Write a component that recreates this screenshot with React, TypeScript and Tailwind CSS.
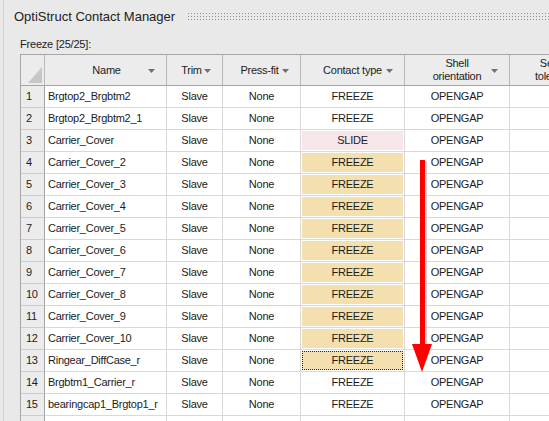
import React from "react";

type Row = { name: string; contact: "FREEZE" | "SLIDE"; hl?: "tan" | "pink"; focus?: boolean };

const ROWS: Row[] = [
  { name: "Brgtop2_Brgbtm2", contact: "FREEZE" },
  { name: "Brgtop2_Brgbtm2_1", contact: "FREEZE" },
  { name: "Carrier_Cover", contact: "SLIDE", hl: "pink" },
  { name: "Carrier_Cover_2", contact: "FREEZE", hl: "tan" },
  { name: "Carrier_Cover_3", contact: "FREEZE", hl: "tan" },
  { name: "Carrier_Cover_4", contact: "FREEZE", hl: "tan" },
  { name: "Carrier_Cover_5", contact: "FREEZE", hl: "tan" },
  { name: "Carrier_Cover_6", contact: "FREEZE", hl: "tan" },
  { name: "Carrier_Cover_7", contact: "FREEZE", hl: "tan" },
  { name: "Carrier_Cover_8", contact: "FREEZE", hl: "tan" },
  { name: "Carrier_Cover_9", contact: "FREEZE", hl: "tan" },
  { name: "Carrier_Cover_10", contact: "FREEZE", hl: "tan" },
  { name: "Ringear_DiffCase_r", contact: "FREEZE", hl: "tan", focus: true },
  { name: "Brgbtm1_Carrier_r", contact: "FREEZE" },
  { name: "bearingcap1_Brgtop1_r", contact: "FREEZE" },
  { name: "", contact: "FREEZE" },
];

// small sort/filter glyph used in the column headers
function Glyph() {
  return (
    <svg width="7" height="4" viewBox="0 0 7 4" className="absolute right-[11px] top-[14px]">
      <path d="M0 0H7L3.5 4Z" fill="#707070" />
    </svg>
  );
}

const HEAD = "relative flex h-[31px] shrink-0 items-center justify-center border-r border-b border-r-[#b9b9b9] border-b-[#a5a5a5] bg-[#ececec] text-center leading-[13px]";
const CELL = "flex h-[22px] shrink-0 items-center border-r border-b border-[#d9d9d9] bg-white";

export default function App() {
  return (
    <div className="relative h-[421px] w-[549px] overflow-hidden bg-[#e9e9e9] text-[#1c1c1c]" style={{ fontFamily: '"Liberation Sans", Arial, sans-serif' }}>
      <div className="ml-[3px] h-full border-l border-[#d2d2d2] pt-[8px]">
        {/* title bar with grip */}
        <div className="flex h-[18px] items-center">
          <span className="pl-[10px] text-[13px] leading-[18px] text-[#222]">OptiStruct Contact Manager</span>
          <svg className="ml-[13px] flex-1" height="8">
            <defs>
              <pattern id="grip" width="3" height="3" patternUnits="userSpaceOnUse">
                <rect x="0" y="0" width="1" height="1" fill="#8f8f8f" />
              </pattern>
            </defs>
            <rect x="0" y="0" width="100%" height="8" fill="url(#grip)" />
          </svg>
        </div>

        <div className="mt-[11px] pl-[16px] text-[11px] leading-[14px] tracking-[-0.2px]">Freeze [25/25]:</div>

        {/* grid */}
        <div className="ml-[16px] mt-[3px] border-l border-t border-[#a5a5a5] text-[11px] tracking-[-0.25px]">
          <div className="flex">
            <div className={`${HEAD} w-[24px] border-r-[#a5a5a5]`}>
              <svg width="14" height="16" viewBox="0 0 14 16" className="absolute right-[2px] bottom-[2px]">
                <path d="M14 0V16H0Z" fill="#c6c6c6" />
              </svg>
            </div>
            <div className={`${HEAD} w-[122px]`}>
              <span className="pl-[2px]">Name</span>
              <Glyph />
            </div>
            <div className={`${HEAD} w-[56px]`}>
              <span className="pr-[6px]">Trim</span>
              <Glyph />
            </div>
            <div className={`${HEAD} w-[78px]`}>
              <span className="pr-[4px]">Press-fit</span>
              <Glyph />
            </div>
            <div className={`${HEAD} w-[104px]`}>
              <span>Contact type</span>
              <Glyph />
            </div>
            <div className={`${HEAD} w-[105px]`}>
              <span>
                Shell
                <br />
                orientation
              </span>
              <Glyph />
            </div>
            <div className={`${HEAD} w-[100px]`}>
              <span className="pr-[6px]">
                Search
                <br />
                tolerance
              </span>
            </div>
          </div>

          {ROWS.map((r, i) => (
            <div key={i} className="flex">
              <div className="flex h-[22px] w-[24px] shrink-0 items-center border-r border-b border-r-[#a5a5a5] border-b-[#cdcdcd] bg-[#ececec] pl-[5px]">
                {r.name && i + 1}
              </div>
              <div className={`${CELL} w-[122px] pl-[3px]`}>{r.name}</div>
              <div className={`${CELL} w-[56px] justify-center`}>{r.name && "Slave"}</div>
              <div className={`${CELL} w-[78px] justify-center`}>{r.name && "None"}</div>
              <div className={`${CELL} w-[104px] p-[1px]`}>
                {r.name && (
                  <div
                    className={clsxLike(
                      "flex h-full w-full items-center justify-center",
                      r.hl === "tan" && "bg-[#f3e0ae]",
                      r.hl === "pink" && "bg-[#f6e6ea]",
                      r.focus && "border border-dotted border-[#1d2560]",
                    )}
                  >
                    {r.contact}
                  </div>
                )}
              </div>
              <div className={`${CELL} w-[105px] justify-center`}>{r.name && "OPENGAP"}</div>
              <div className={`${CELL} w-[100px]`} />
            </div>
          ))}
        </div>
      </div>

      {/* red annotation arrow */}
      <svg className="absolute left-[408px] top-[158px]" width="30" height="220" viewBox="0 0 30 220">
        <rect x="14" y="3" width="5" height="187" fill="#b5b5b5" opacity="0.6" />
        <rect x="12" y="2" width="5" height="186" fill="#ff0000" />
        <path d="M4 186H24L14 214Z" fill="#ff0000" />
      </svg>
    </div>
  );
}

function clsxLike(...parts: (string | false | undefined)[]) {
  return parts.filter(Boolean).join(" ");
}
